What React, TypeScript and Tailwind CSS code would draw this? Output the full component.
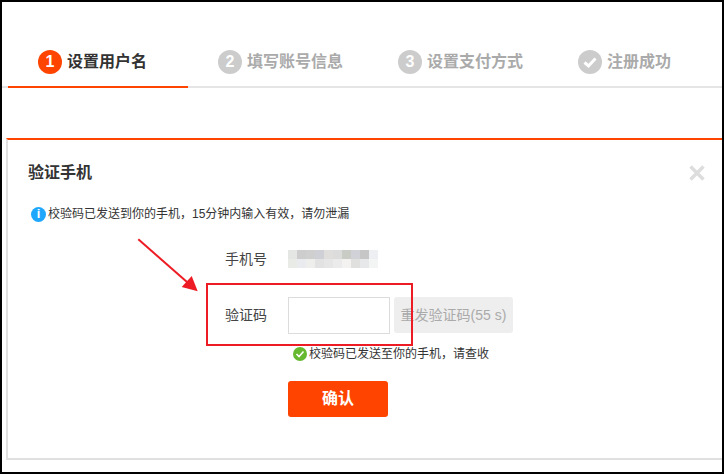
import * as React from 'react';

const font = { fontFamily: '"Liberation Sans", "Noto Sans CJK SC", sans-serif' };

const steps = [
  { mark: '1', label: '设置用户名', active: true },
  { mark: '2', label: '填写账号信息', active: false },
  { mark: '3', label: '设置支付方式', active: false },
  { mark: 'check', label: '注册成功', active: false },
];

// blurred phone number, top row then bottom row
const blurTop = ['#e4e6e4', '#cdcdcd', '#cfcfcf', '#cfcfd6', '#dfdedc', '#dcdcdc', '#c9cbc5', '#d0d2d8', '#c6c6c6', '#eeeff2'];
const blurBottom = ['#e9ebe6', '#e9ebee', '#eeeeec', '#e2e2e2', '#e6e6e6', '#ebebeb', '#f3f2f0', '#e0e0de', '#e6e8ea', '#f3f4f4'];

const StepMark = ({ mark, active }: { mark: string; active: boolean }) => (
  <span className={`flex h-6 w-6 shrink-0 items-center justify-center rounded-full text-[16px] font-bold text-white ${active ? 'bg-[#ff4400]' : 'bg-[#cccccc]'}`}>
    {mark === 'check' ? (
      <svg width="16" height="16" viewBox="0 0 16 16">
        <path d="M2.5 8.5 L6.5 12 L13.5 4.5" fill="none" stroke="#fff" strokeWidth="3" />
      </svg>
    ) : (
      mark
    )}
  </span>
);

const App = () => {
  return (
    <div className="h-[474px] w-[724px] overflow-hidden border-2 border-black bg-white" style={font}>
      <div className="flex h-[86px] items-end border-b-2 border-[#e5e5e5] pl-[6px]">
        {steps.map((step) => (
          <div
            key={step.label}
            className={`-mb-[2px] flex h-[38px] w-[180px] shrink-0 items-start gap-[5px] border-b-2 pl-[30px] ${step.active ? 'border-[#ff4400]' : 'border-transparent'}`}
          >
            <StepMark mark={step.mark} active={step.active} />
            <span className={`text-[16px] font-bold leading-[24px] ${step.active ? 'text-[#333333]' : 'text-[#aaaaaa]'}`}>{step.label}</span>
          </div>
        ))}
      </div>

      <div className="ml-[4px] mt-[50px] h-[322px] border-t-2 border-b-2 border-l-2 border-t-[#ff4400] border-b-[#e0e0e0] border-l-[#e0e0e0]">
        <div className="flex items-start justify-between pl-[20px] pr-[17px] pt-[21px]">
          <h2 className="text-[16px] font-bold leading-[24px] text-[#333333]">验证手机</h2>
          <svg width="16" height="16" viewBox="0 0 16 16" className="mt-[4px]">
            <path d="M1.5 1.5 L14.5 14.5 M14.5 1.5 L1.5 14.5" stroke="#dddddd" strokeWidth="3.4" />
          </svg>
        </div>

        <div className="mt-[20px] flex items-center gap-[2px] pl-[23px] text-[12px] leading-[18px] text-[#333333]">
          <span className="flex h-[15px] w-[15px] items-center justify-center rounded-full bg-[#1ea7fd] text-[13px] font-bold text-white">i</span>
          <span>校验码已发送到你的手机，15分钟内输入有效，请勿泄漏</span>
        </div>

        <div className="mt-[26px] flex items-center pl-[217px] text-[14px] leading-[20px] text-[#444444]">
          <span>手机号</span>
          <div className="ml-[21px] grid h-[18px] w-[90px] grid-cols-10">
            {blurTop.map((c, i) => (
              <span key={i} style={{ backgroundColor: c }} />
            ))}
            {blurBottom.map((c, i) => (
              <span key={i} style={{ backgroundColor: c }} />
            ))}
          </div>
        </div>

        <div className="mt-[28px] flex items-start pl-[217px] text-[14px]">
          <span className="leading-[37px] text-[#444444]">验证码</span>
          <input className="ml-[21px] h-[37px] w-[102px] border border-[#dcdcdc] bg-white outline-none" />
          <span className="ml-[4px] flex h-[36px] w-[119px] items-center justify-center rounded-[3px] bg-[#eeeeee] text-[#aaaaaa]">重发验证码(55 s)</span>
        </div>

        <div className="mt-[12px] flex items-center gap-[2px] pl-[285px] text-[12px] leading-[16px] text-[#333333]">
          <svg width="14" height="14" viewBox="0 0 14 14">
            <circle cx="7" cy="7" r="7" fill="#66b82e" />
            <path d="M3.5 7 L6 9.5 L10.5 4.5" fill="none" stroke="#fff" strokeWidth="1.6" />
          </svg>
          <span>校验码已发送至你的手机，请查收</span>
        </div>

        <button className="ml-[280px] mt-[19px] block h-[36px] w-[100px] rounded-[3px] bg-[#ff4400] text-[16px] font-bold text-white">确认</button>
      </div>

      {/* red annotations drawn on top of the screenshot */}
      <div className="pointer-events-none absolute left-[206px] top-[283px] h-[63px] w-[207px] border-2 border-[#ed1c24]" />
      <svg className="pointer-events-none absolute left-[130px] top-[232px]" width="80" height="70" viewBox="0 0 80 70">
        <path d="M8.3 7.3 L57 50" stroke="#ed1c24" strokeWidth="2" />
        <path d="M67.7 59.3 L51.7 55 L61.7 44 Z" fill="#ed1c24" />
      </svg>
    </div>
  );
};

export default App;
